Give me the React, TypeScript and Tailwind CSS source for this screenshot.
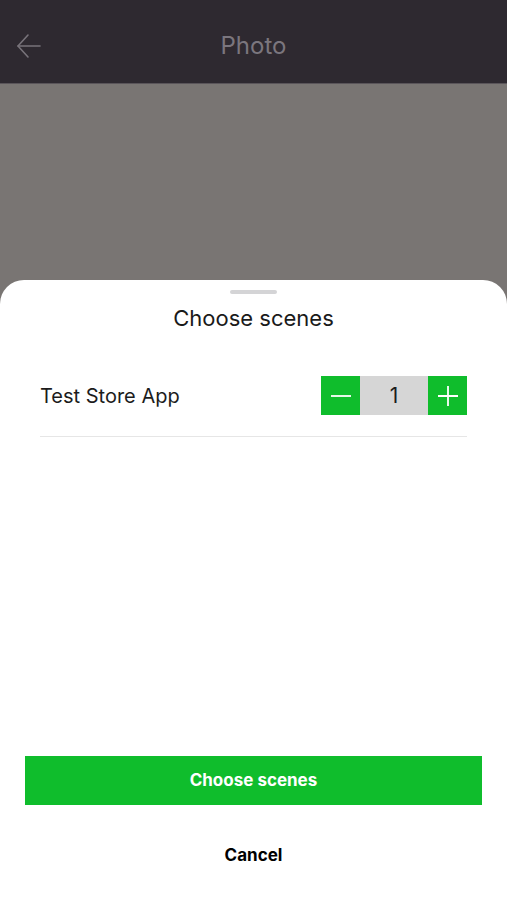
import { useState } from "react";

export default function App() {
  const [count, setCount] = useState(1);

  return (
    <div
      className="flex h-[900px] w-full flex-col bg-[#797573]"
      style={{ fontFamily: "Inter, 'Noto Sans', sans-serif" }}
    >
      {/* header */}
      <div className="relative flex h-[84px] shrink-0 items-center justify-center border-b border-[#5a555a] bg-[#2e2930] pt-[8px]">
        <button className="absolute left-[16px] top-[33px] text-[#78737a]">
          <svg width="26" height="26" viewBox="0 0 26 26" fill="none" stroke="currentColor" strokeWidth="1.6" strokeLinecap="round" strokeLinejoin="round">
            <path d="M24 13H2" />
            <path d="M12 2L2 13l10 11" />
          </svg>
        </button>
        <span className="text-[24px] text-[#7b767e]">Photo</span>
      </div>

      {/* photo area */}
      <div className="h-[196px] shrink-0" />

      {/* bottom sheet */}
      <div className="flex flex-1 flex-col rounded-t-[24px] bg-white">
        <div className="mx-auto mt-[10px] h-[4px] w-[47px] rounded-full bg-[#d4d4d6]" />
        <h2 className="mt-[12px] text-center text-[22px] leading-[24px] text-[#1a1a1a]">Choose scenes</h2>

        <div className="mx-[40px] mt-[46px] flex items-center justify-between border-b border-[#e6e6e6] pb-[21px]">
          <span className="text-[20px] text-[#1c1c1c]">Test Store App</span>
          <div className="flex h-[39px]">
            <button
              onClick={() => setCount(Math.max(0, count - 1))}
              className="flex w-[39px] items-center justify-center bg-[#0fbd2c]"
            >
              <svg width="22" height="22" viewBox="0 0 22 22" stroke="white" strokeWidth="1.8">
                <path d="M1 11h20" />
              </svg>
            </button>
            <div className="flex w-[68px] items-center justify-center bg-[#d6d6d6] text-[21px] text-[#1c1c1c]">
              {count}
            </div>
            <button
              onClick={() => setCount(count + 1)}
              className="flex w-[39px] items-center justify-center bg-[#0fbd2c]"
            >
              <svg width="22" height="22" viewBox="0 0 22 22" stroke="white" strokeWidth="1.8">
                <path d="M1 11h20M11 1v20" />
              </svg>
            </button>
          </div>
        </div>

        <div className="flex-1" />

        <button className="mx-[25px] h-[49px] bg-[#0fbd2c] text-[17px] font-bold text-white">
          Choose scenes
        </button>
        <button className="mb-[35px] mt-[40px] h-[20px] text-center text-[17px] font-bold leading-[20px] text-black">
          Cancel
        </button>
      </div>
    </div>
  );
}
